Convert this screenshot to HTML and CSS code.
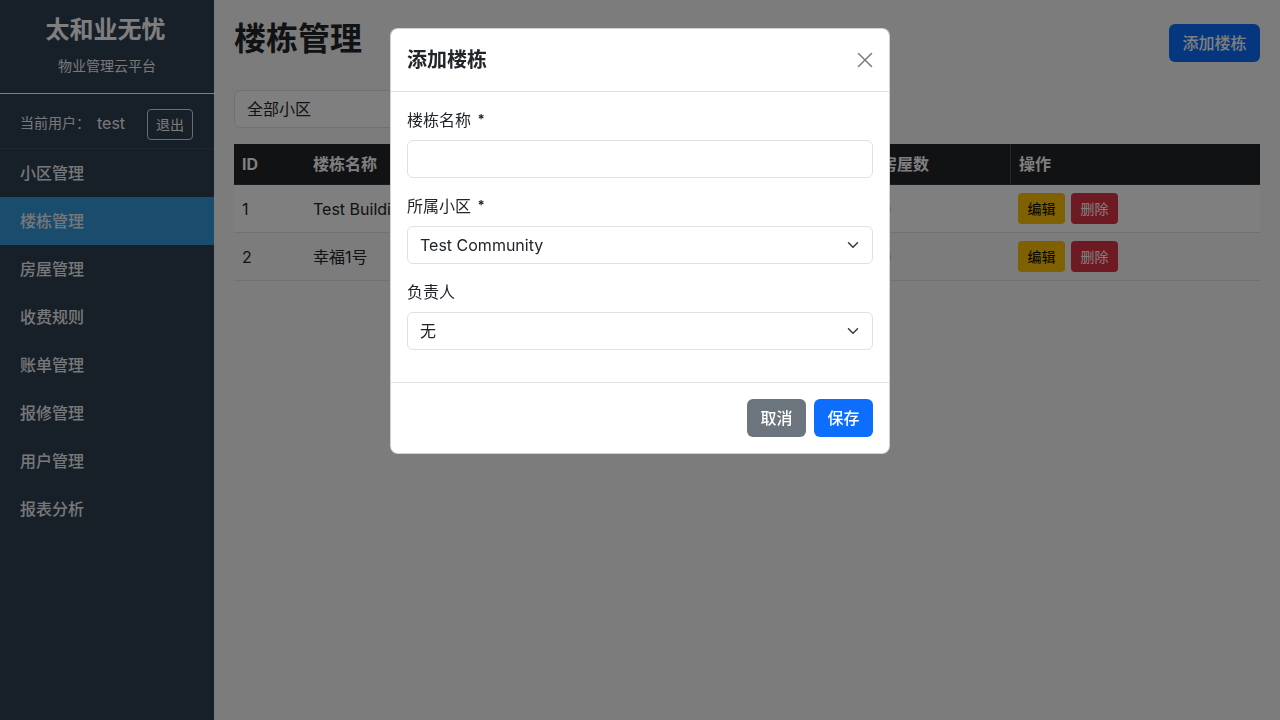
FILE: index.html
```html
<!DOCTYPE html>
<html lang="zh-CN">
<head>
    <meta charset="UTF-8">
    <meta name="viewport" content="width=device-width, initial-scale=1.0">
    <title>楼栋管理 - 太和业无忧</title>
    <link rel="stylesheet" href="styles.css">
</head>
<body>
    <div class="layout">
        <aside class="sidebar">
            <div class="brand">
                <div class="brand-name">太和业无忧</div>
                <div class="brand-sub">物业管理云平台</div>
            </div>
            <div class="user-bar">
                <span class="user-label">当前用户：</span>
                <span class="user-name">test</span>
                <button class="btn-logout">退出</button>
            </div>
            <nav class="menu">
                <a href="#">小区管理</a>
                <a href="#" class="active">楼栋管理</a>
                <a href="#">房屋管理</a>
                <a href="#">收费规则</a>
                <a href="#">账单管理</a>
                <a href="#">报修管理</a>
                <a href="#">用户管理</a>
                <a href="#">报表分析</a>
            </nav>
        </aside>

        <main class="content">
            <div class="page-head">
                <h2>楼栋管理</h2>
                <button class="btn btn-primary">添加楼栋</button>
            </div>

            <div class="filter">
                <select class="form-select">
                    <option>全部小区</option>
                    <option>Test Community</option>
                </select>
                <svg class="chevron" width="12" height="12" viewBox="0 0 16 16"><path d="M2 5l6 6 6-6" fill="none" stroke="#343a40" stroke-width="2" stroke-linecap="round" stroke-linejoin="round"/></svg>
            </div>

            <table class="data-table">
                <colgroup>
                    <col style="width: 71px">
                    <col style="width: 200px">
                    <col style="width: 200px">
                    <col style="width: 168px">
                    <col style="width: 137px">
                    <col style="width: 250px">
                </colgroup>
                <thead>
                    <tr>
                        <th>ID</th>
                        <th>楼栋名称</th>
                        <th>所属小区</th>
                        <th>负责人</th>
                        <th>房屋数</th>
                        <th class="col-actions">操作</th>
                    </tr>
                </thead>
                <tbody>
                    <tr>
                        <td>1</td>
                        <td>Test Building</td>
                        <td>Test Community</td>
                        <td>无</td>
                        <td>0</td>
                        <td class="col-actions"><button class="btn-sm btn-warning">编辑</button><button class="btn-sm btn-danger">删除</button></td>
                    </tr>
                    <tr>
                        <td>2</td>
                        <td>幸福1号</td>
                        <td>Test Community</td>
                        <td>无</td>
                        <td>0</td>
                        <td class="col-actions"><button class="btn-sm btn-warning">编辑</button><button class="btn-sm btn-danger">删除</button></td>
                    </tr>
                </tbody>
            </table>
        </main>
    </div>

    <!-- add building dialog -->
    <div class="backdrop"></div>
    <div class="modal">
        <div class="modal-dialog">
            <div class="modal-header">
                <h5 class="modal-title">添加楼栋</h5>
                <button class="btn-close" aria-label="关闭">
                    <svg width="16" height="16" viewBox="0 0 16 16"><path d="M1.5 1.5l13 13M14.5 1.5l-13 13" stroke="#000" stroke-width="1.6" stroke-linecap="round"/></svg>
                </button>
            </div>
            <div class="modal-body">
                <div class="field">
                    <label>楼栋名称 <span class="req">*</span></label>
                    <input type="text" class="form-control">
                </div>
                <div class="field">
                    <label>所属小区 <span class="req">*</span></label>
                    <div class="select-wrap">
                        <select class="form-select">
                            <option>Test Community</option>
                        </select>
                        <svg class="chevron" width="12" height="12" viewBox="0 0 16 16"><path d="M2 5l6 6 6-6" fill="none" stroke="#343a40" stroke-width="2" stroke-linecap="round" stroke-linejoin="round"/></svg>
                    </div>
                </div>
                <div class="field">
                    <label>负责人</label>
                    <div class="select-wrap">
                        <select class="form-select">
                            <option>无</option>
                        </select>
                        <svg class="chevron" width="12" height="12" viewBox="0 0 16 16"><path d="M2 5l6 6 6-6" fill="none" stroke="#343a40" stroke-width="2" stroke-linecap="round" stroke-linejoin="round"/></svg>
                    </div>
                </div>
            </div>
            <div class="modal-footer">
                <button class="btn btn-secondary">取消</button>
                <button class="btn btn-primary">保存</button>
            </div>
        </div>
    </div>
</body>
</html>
```

FILE: styles.css
```css
html, body {
    margin: 0;
    padding: 0;
    height: 100%;
}
body {
    font-family: Inter, "Noto Sans CJK SC", sans-serif;
    font-size: 16px;
    line-height: 1.5;
    color: #212529;
    background: #f8f9fa;
}
* {
    box-sizing: border-box;
}
button, select, input {
    font-family: inherit;
}
.layout {
    display: flex;
    min-height: 100vh;
}

/* sidebar */
.sidebar {
    width: 214px;
    flex-shrink: 0;
    background: #2f3e52;
    color: #fff;
}
.brand {
    text-align: center;
    padding: 16px 0 17px;
    border-bottom: 1px solid #fff;
}
.brand-name {
    font-size: 24px;
    font-weight: bold;
    line-height: 1.2;
    margin-left: -3px;
}
.brand-sub {
    font-size: 14px;
    margin-top: 10px;
    color: #eef0f2;
}
.user-bar {
    display: flex;
    align-items: center;
    padding: 15px 20px 8px;
    border-bottom: 1px solid rgba(255, 255, 255, 0.08);
    font-size: 14px;
    color: #eef0f2;
}
.user-label {
    margin-top: -3px;
}
.user-name {
    font-size: 16px;
    margin-left: 7px;
    margin-top: -3px;
}
.btn-logout {
    margin-left: 22px;
    padding: 4px 8px;
    font-size: 14px;
    line-height: 21px;
    color: #f8f9fa;
    background: transparent;
    border: 1px solid #d8dadd;
    border-radius: 4px;
}
.menu a {
    display: block;
    padding: 12px 20px;
    font-size: 16px;
    font-weight: 500;
    color: #eef0f2;
    text-decoration: none;
}
.menu a.active {
    background: #3498db;
}

/* main content */
.content {
    flex: 1;
    padding: 20px;
}
.page-head {
    display: flex;
    justify-content: space-between;
    align-items: center;
    margin-bottom: 24px;
}
.page-head h2 {
    margin: 0 0 8px;
    font-size: 32px;
    font-weight: bold;
    line-height: 1.2;
}
.btn {
    padding: 6px 12.5px;
    font-size: 16px;
    font-weight: 500;
    line-height: 24px;
    border: 1px solid transparent;
    border-radius: 6px;
    color: #fff;
}
.btn-primary {
    background: #0d6efd;
}
.btn-secondary {
    background: #6c757d;
}
.filter, .select-wrap {
    position: relative;
}
.filter {
    width: 300px;
    margin-bottom: 16px;
}
.form-select, .form-control {
    display: block;
    width: 100%;
    height: 38px;
    padding: 6px 12px;
    font-size: 16px;
    line-height: 24px;
    color: #212529;
    background: #fff;
    border: 1px solid #dee2e6;
    border-radius: 6px;
    appearance: none;
    outline: none;
}
.chevron {
    position: absolute;
    right: 14px;
    top: 13px;
    pointer-events: none;
}

/* building table */
.data-table {
    width: 100%;
    border-collapse: separate;
    border-spacing: 0;
    table-layout: fixed;
}
.data-table th {
    padding: 8px;
    text-align: left;
    font-weight: bold;
    color: #fff;
    background: #212529;
    border-bottom: 1px solid #32383e;
}
.data-table th.col-actions {
    border-left: 1px solid #4d5154;
}
.data-table td {
    padding: 8px;
    border-bottom: 1px solid #dee2e6;
    white-space: nowrap;
    overflow: hidden;
}
.data-table tbody tr:nth-child(odd) {
    background: #fff;
}
.btn-sm {
    width: 47px;
    padding: 4px 0;
    font-size: 14px;
    line-height: 21px;
    border: 1px solid transparent;
    border-radius: 4px;
}
.btn-sm + .btn-sm {
    margin-left: 6px;
}
.btn-warning {
    background: #ffc107;
    color: #000;
}
.btn-danger {
    background: #dc3545;
    color: #fff;
}

/* dialog */
.backdrop {
    position: fixed;
    inset: 0;
    background: rgba(0, 0, 0, 0.5);
}
.modal {
    position: fixed;
    inset: 0;
}
.modal-dialog {
    width: 500px;
    margin: 28px auto;
    background: #fff;
    border: 1px solid rgba(0, 0, 0, 0.18);
    border-radius: 8px;
}
.modal-header {
    display: flex;
    align-items: center;
    justify-content: space-between;
    padding: 16px;
    border-bottom: 1px solid #dee2e6;
}
.modal-title {
    margin: 0;
    font-size: 20px;
    font-weight: bold;
    line-height: 30px;
}
.btn-close {
    width: 24px;
    height: 24px;
    padding: 4px;
    margin-right: -4px;
    background: transparent;
    border: none;
    opacity: 0.5;
    display: flex;
}
.modal-body {
    padding: 16px;
}
.field {
    margin-bottom: 16px;
}
.field label {
    display: block;
    margin-bottom: 8px;
}
.req {
    font-size: 13px;
    font-weight: bold;
    margin-left: 2px;
    vertical-align: 2px;
}
.modal-footer {
    display: flex;
    justify-content: flex-end;
    gap: 8px;
    padding: 16px;
    border-top: 1px solid #dee2e6;
}
```
